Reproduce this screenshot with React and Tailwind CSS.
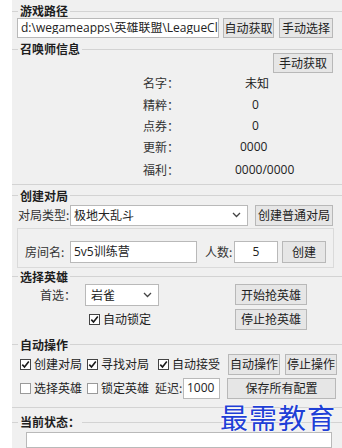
import React from "react";

const LINE = "bg-[#d3d3d3]";

function Header({ children, className = "" }) {
  return (
    <div className={"flex items-center " + className}>
      <div className={"w-[6px] h-px " + LINE} />
      <span className="px-[2px] text-[12px] font-bold leading-none text-[#1e1e1e] whitespace-nowrap">{children}</span>
      <div className={"flex-1 h-px " + LINE} />
    </div>
  );
}

function Btn({ children, className = "" }) {
  return (
    <div
      className={
        "flex items-center justify-center border border-[#b8b8b8] bg-[#e6e6e6] text-[12px] leading-none text-[#222] whitespace-nowrap " +
        className
      }
    >
      {children}
    </div>
  );
}

function Box({ children, className = "" }) {
  return (
    <div
      className={
        "flex items-center border border-[#b9b9b9] bg-white text-[12px] leading-none text-[#222] overflow-hidden whitespace-nowrap " +
        className
      }
    >
      {children}
    </div>
  );
}

function Chevron() {
  return (
    <svg width="9" height="6" viewBox="0 0 9 6" className="shrink-0">
      <path d="M1 1 L4.5 4.5 L8 1" stroke="#444" strokeWidth="1.3" fill="none" />
    </svg>
  );
}

function Check({ checked, label }) {
  return (
    <div className="flex items-center gap-[3px]">
      <div
        className={
          "w-[11px] h-[11px] border bg-white flex items-center justify-center " +
          (checked ? "border-[#444]" : "border-[#9a9a9a]")
        }
      >
        {checked && (
          <svg width="9" height="9" viewBox="0 0 9 9">
            <path d="M1.3 4.6 L3.5 7 L7.8 1.6" stroke="#1a1a1a" strokeWidth="1.6" fill="none" />
          </svg>
        )}
      </div>
      <span className="text-[12px] leading-none text-[#222] whitespace-nowrap">{label}</span>
    </div>
  );
}

export default function App() {
  return (
    <div className="w-[342px] h-[448px] overflow-hidden bg-white flex font-['Noto_Sans_CJK_SC',sans-serif]">
      <div className="w-[12px] shrink-0 bg-white" />
      <div className="relative flex-1 bg-[#f0f0f0] flex flex-col pt-[5px]">
        {/* 游戏路径 */}
        <Header className="h-[14px]">游戏路径</Header>
        <div className="flex mt-[1px] h-[20px]">
          <Box className="ml-[5px] w-[202px] h-[20px] pl-[3px] text-[12.5px] font-['Open_Sans','Noto_Sans_CJK_SC',sans-serif]">
            <span className="block w-full overflow-hidden">{"d:\\wegameapps\\英雄联盟\\LeagueClie"}</span>
          </Box>
          <Btn className="ml-[4px] w-[51px] h-[20px]">自动获取</Btn>
          <Btn className="ml-[5px] w-[54px] h-[20px]">手动选择</Btn>
        </div>

        {/* 召唤师信息 */}
        <Header className="mt-[5px] h-[12px]">召唤师信息</Header>
        <div className="flex justify-end pr-[9px] mt-[-2px]">
          <Btn className="w-[60px] h-[20px]">手动获取</Btn>
        </div>
        <div className="flex flex-col mt-[-1px] text-[12px] leading-none text-[#333]">
          <div className="flex items-center h-[22px]">
            <span className="ml-[131px] w-[102px]">名字：</span>
            <span className="text-[#222]">未知</span>
          </div>
          <div className="flex items-center h-[21px]">
            <span className="ml-[131px] w-[109px]">精粹：</span>
            <span className="text-[#222] font-['Open_Sans',sans-serif]">0</span>
          </div>
          <div className="flex items-center h-[21px]">
            <span className="ml-[131px] w-[109px]">点券：</span>
            <span className="text-[#222] font-['Open_Sans',sans-serif]">0</span>
          </div>
          <div className="flex items-center h-[22px]">
            <span className="ml-[131px] w-[97px]">更新：</span>
            <span className="text-[#222] font-['Open_Sans',sans-serif]">0000</span>
          </div>
          <div className="flex items-center h-[23px]">
            <span className="ml-[131px] w-[92px]">福利：</span>
            <span className="text-[#222] font-['Open_Sans',sans-serif]">0000/0000</span>
          </div>
        </div>
        <div className={"mt-[3px] h-px w-full " + LINE} />

        {/* 创建对局 */}
        <Header className="mt-[5px] h-[12px]">创建对局</Header>
        <div className="flex items-center mt-[3px] h-[21px]">
          <span className="ml-[6px] w-[52px] text-[12px] leading-none text-[#333] whitespace-nowrap">对局类型:</span>
          <Box className="w-[178px] h-[21px] pl-[3px] pr-[6px] justify-between">
            <span>极地大乱斗</span>
            <Chevron />
          </Box>
          <Btn className="ml-[7px] w-[78px] h-[21px]">创建普通对局</Btn>
        </div>
        <div className="ml-[5px] mt-[2px] w-[317px] h-[48px] border border-[#dadada] flex items-start pt-[12px] pl-[7px]">
          <div className="flex items-center h-[22px]">
            <span className="w-[45px] text-[12px] leading-none text-[#333] whitespace-nowrap">房间名:</span>
            <Box className="w-[127px] h-[22px] pl-[3px] font-['Open_Sans','Noto_Sans_CJK_SC',sans-serif]">5v5训练营</Box>
            <span className="ml-[8px] w-[29px] text-[12px] leading-none text-[#333] whitespace-nowrap">人数:</span>
            <Box className="w-[44px] h-[22px] justify-center font-['Open_Sans',sans-serif]">5</Box>
            <Btn className="ml-[4px] w-[44px] h-[22px]">创建</Btn>
          </div>
        </div>

        {/* 选择英雄 */}
        <Header className="mt-[3px] h-[12px]">选择英雄</Header>
        <div className="flex items-center mt-[1px] h-[22px]">
          <span className="ml-[28px] w-[45px] text-[12px] leading-none text-[#333] whitespace-nowrap">首选：</span>
          <Box className="w-[74px] h-[22px] pl-[5px] pr-[6px] justify-between">
            <span>岩雀</span>
            <Chevron />
          </Box>
          <Btn className="ml-[76px] w-[72px] h-[21px]">开始抢英雄</Btn>
        </div>
        <div className="flex items-center mt-[3px] h-[22px]">
          <div className="ml-[77px] w-[146px]">
            <Check checked label="自动锁定" />
          </div>
          <Btn className="w-[72px] h-[21px]">停止抢英雄</Btn>
        </div>

        {/* 自动操作 */}
        <Header className="mt-[9px] h-[12px]">自动操作</Header>
        <div className="flex items-center mt-[3px] h-[21px]">
          <div className="ml-[8px] w-[67px]">
            <Check checked label="创建对局" />
          </div>
          <div className="w-[71px]">
            <Check checked label="寻找对局" />
          </div>
          <div className="w-[70px]">
            <Check checked label="自动接受" />
          </div>
          <Btn className="w-[52px] h-[21px]">自动操作</Btn>
          <Btn className="ml-[5px] w-[52px] h-[21px]">停止操作</Btn>
        </div>
        <div className="flex items-center mt-[3px] h-[21px]">
          <div className="ml-[8px] w-[67px]">
            <Check label="选择英雄" />
          </div>
          <div className="w-[68px]">
            <Check label="锁定英雄" />
          </div>
          <span className="w-[28px] text-[12px] leading-none text-[#333] whitespace-nowrap">延迟:</span>
          <Box className="w-[37px] h-[21px] pl-[3px] font-['Open_Sans',sans-serif]">1000</Box>
          <Btn className="ml-[7px] w-[109px] h-[21px]">保存所有配置</Btn>
        </div>
        <div className={"mt-[8px] h-px w-full " + LINE} />

        {/* 当前状态 */}
        <Header className="mt-[9px] h-[12px]">当前状态：</Header>
        <div className="ml-[14px] mt-[4px] w-[306px] h-[20px] border border-[#b9b9b9] bg-white" />

        {/* watermark */}
        <div className="absolute left-[208px] top-[403px] text-[28px] leading-none text-[#1f3fd6] tracking-[1px] whitespace-nowrap font-['Noto_Sans_CJK_SC',serif] [text-shadow:0_0_2px_#fff,0_0_2px_#fff]">
          最需教育
        </div>
      </div>
    </div>
  );
}
